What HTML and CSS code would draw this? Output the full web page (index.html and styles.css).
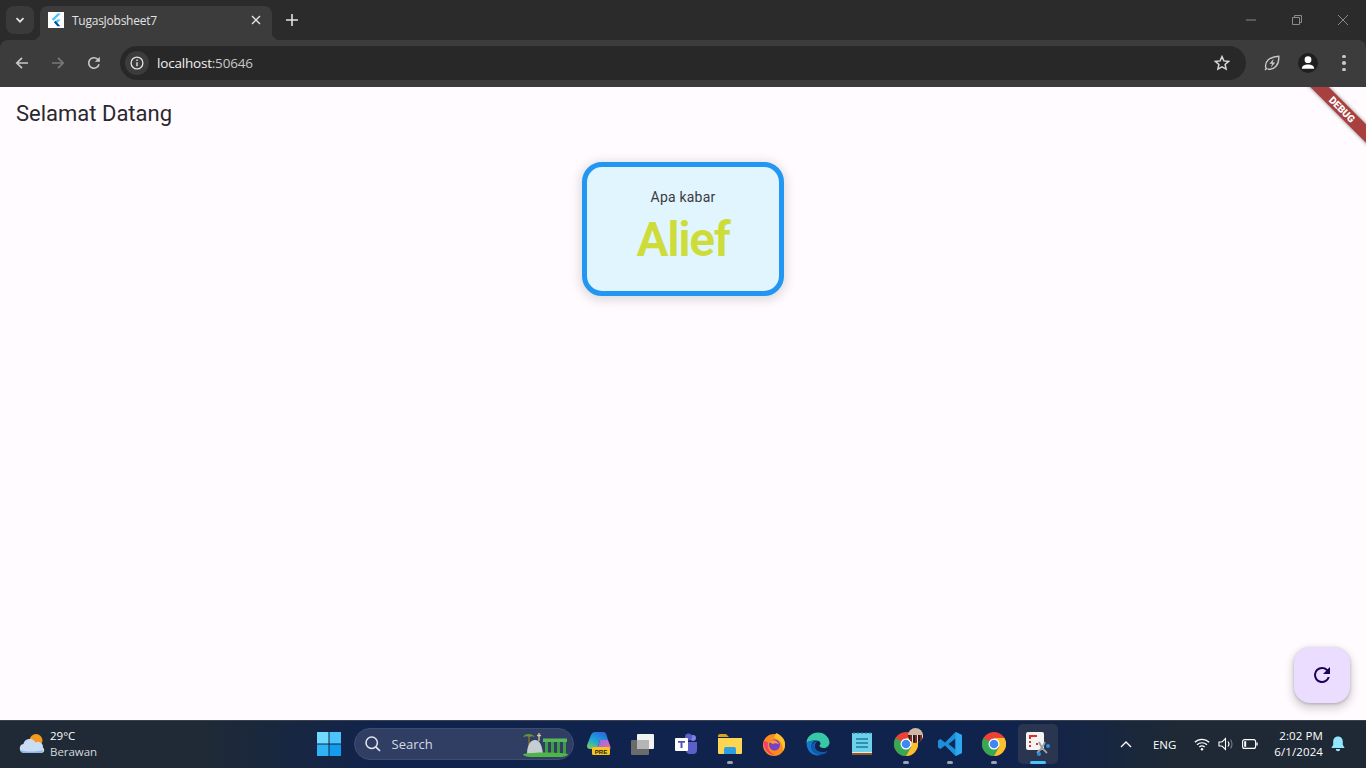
FILE: index.html
```html
<!doctype html>
<html>
<head>
<title>TugasJobsheet7</title>
<link rel="stylesheet" href="styles.css">
</head>
<body>

<div class="browser">
<div class="tabstrip">
    <div class="tabsearch">
        <svg width="12" height="12" viewBox="0 0 12 12"><path d="M2.5 4.2 6 7.7l3.5-3.5" fill="none" stroke="#e3e3e3" stroke-width="1.7"/></svg>
    </div>
    <div class="tab">
        <div class="favicon">
            <svg width="16" height="16" viewBox="0 0 16 16"><path d="M9.6 1.5h3.2L5.4 8.700 3.800 7.200z" fill="#47c5fb"/><path d="M9.6 7.500h3.200L8.200 12 5.900 10.200z" fill="#47c5fb"/><path d="M5.900 10.200 7.500 8.700l4.900 5.500H9.400z" fill="#00569e"/></svg>
        </div>
        <span class="tabtitle">TugasJobsheet7</span>
        <svg class="tabclose" width="10" height="10" viewBox="0 0 10 10"><path d="M1 1l8 8M9 1 1 9" stroke="#e3e3e3" stroke-width="1.4"/></svg>
    </div>
    <svg class="newtab" width="12" height="12" viewBox="0 0 12 12"><path d="M6 0v12M0 6h12" stroke="#e3e3e3" stroke-width="1.6"/></svg>
    <div class="winbtns">
        <svg width="10" height="10" viewBox="0 0 10 10"><path d="M0 5h10" stroke="#8a8a8a"/></svg>
        <svg width="10" height="10" viewBox="0 0 10 10"><path d="M.5 2.5h7v7h-7zM2.5 2.5v-2h7v7h-2" fill="none" stroke="#8a8a8a"/></svg>
        <svg width="10" height="10" viewBox="0 0 10 10"><path d="M0 0l10 10M10 0 0 10" stroke="#8a8a8a"/></svg>
    </div>
</div>

<div class="toolbar">
    <svg class="navicon" width="16" height="16" viewBox="0 0 16 16"><path d="M14 8H3M8 2.800 2.800 8 8 13.200" fill="none" stroke="#c7c7c7" stroke-width="1.700"/></svg>
    <svg class="navicon" width="16" height="16" viewBox="0 0 16 16"><path d="M2 8h11M8 2.800 13.200 8 8 13.200" fill="none" stroke="#787878" stroke-width="1.700"/></svg>
    <svg class="navicon" width="16" height="16" viewBox="0 0 16 16"><path d="M13 9.200A5.200 5.200 0 1 1 11.600 4.300L13.400 6" fill="none" stroke="#c7c7c7" stroke-width="1.600"/><path d="M13.800 1.800v5h-5z" fill="#c7c7c7"/></svg>
    <div class="omnibox">
        <div class="siteinfo">
            <svg width="14" height="14" viewBox="0 0 14 14"><circle cx="7" cy="7" r="5.900" fill="none" stroke="#e3e3e3" stroke-width="1.300"/><path d="M7 6.200v4M7 3.600v1.500" stroke="#e3e3e3" stroke-width="1.400"/></svg>
        </div>
        <span class="url">localhost<span class="port">:50646</span></span>
        <svg class="star" width="16" height="16" viewBox="0 0 16 16"><path d="M8 1.600l1.900 4.300 4.700.5-3.500 3.100 1 4.600L8 11.800l-4.100 2.300 1-4.600L1.400 6.400l4.700-.5z" fill="none" stroke="#d6d6d6" stroke-width="1.500"/></svg>
    </div>
    <svg class="leaf" width="16" height="16" viewBox="0 0 16 16"><path d="M1.900 13.200C.2 7.200 5 1.600 14.800 1.200 15.400 9.500 10.500 15.400 3.600 14M1 15l2-2" fill="none" stroke="#c7c7c7" stroke-width="1.400"/><path d="M9.800 3.800 5.400 8.800h2.700l-1.200 3.600 4.300-5H8.600z" fill="#c7c7c7"/></svg>
    <div class="avatar">
        <svg width="20" height="20" viewBox="0 0 20 20"><circle cx="10" cy="6.700" r="3.400" fill="#fff"/><path d="M3.800 15.800c0-3 3-4.300 6.200-4.300s6.200 1.300 6.200 4.300z" fill="#fff"/></svg>
    </div>
    <div class="kebab"><i></i><i></i><i></i></div>
</div>
</div>

<div class="page">
    <div class="appbar">Selamat Datang</div>
    <div class="card">
        <div class="greet">Apa kabar</div>
        <div class="name">Alief</div>
    </div>
    <div class="fab">
        <svg width="24" height="24" viewBox="0 0 24 24"><path d="M17.650 6.350A7.960 7.960 0 0 0 12 4a8 8 0 1 0 7.730 10h-2.080A6 6 0 1 1 12 6c1.660 0 3.140.69 4.220 1.780L13 11h7V4z" fill="#21005d"/></svg>
    </div>
    <div class="ribbon">DEBUG</div>
</div>

<div class="taskbar">
    <div class="weather">
        <svg width="28" height="26" viewBox="0 0 28 26"><circle cx="18" cy="9.500" r="6.500" fill="#f39a1f"/><path d="M6 22a4.500 4.500 0 0 1-.6-8.900A6.500 6.500 0 0 1 17.500 11.500a5 5 0 0 1 7.500 5c2 1.500 1.500 5.500-1.500 5.500z" fill="#c9def5"/><path d="M2 19c6 2 15 2 23 0-.3 2-1 3-2 3H6c-2 0-3.500-1-4-3z" fill="#8fb6e6"/></svg>
        <div class="weathertext">
            <div class="temp">29°C</div>
            <div class="cond">Berawan</div>
        </div>
    </div>

    <div class="apps">
        <div class="app winlogo">
            <svg width="24" height="24" viewBox="0 0 24 24"><path d="M0 0h11.500v11.500H0z" fill="#6fdcff"/><path d="M12.500 0H24v11.500H12.500z" fill="#4cc4fb"/><path d="M0 12.500h11.500V24H0z" fill="#2fb3f5"/><path d="M12.500 12.500H24V24H12.500z" fill="#129cee"/></svg>
        </div>
        <div class="searchbox">
            <svg width="18" height="18" viewBox="0 0 18 18"><circle cx="7.700" cy="7.700" r="5.700" fill="none" stroke="#e6e9f2" stroke-width="1.500"/><path d="M11.800 11.800 16 16" stroke="#e6e9f2" stroke-width="1.700"/></svg>
            <span class="searchtext">Search</span>
            <svg class="searchart" width="48" height="28" viewBox="0 0 48 28"><path d="M7 5v10" stroke="#8a6a2a" stroke-width="1.500"/><path d="M1 7c2-4 9-4 12 0-3-1-4-1-5 0-2-1-4-1-7 0z" fill="#5c9a3a"/><path d="M5 24c0-8 3-14 8-14s7 6 8 14z" fill="#c4cdd0"/><path d="M17 3v8M15 5.500h4" stroke="#d8c9a0" stroke-width="1.300"/><path d="M21 8.500h24v3.500H21z" fill="#56b85a"/><path d="M23 12h3v12h-3zM29 12h3v12h-3zM35 12h3v12h-3zM41 12h3v12h-3z" fill="#3f9c46"/><path d="M1 24c10-2 34-2 45 0 0 2-4 3-8 3H9c-4 0-8-1-8-3z" fill="#4fb548"/></svg>
        </div>
        <div class="app copilot">
            <svg width="24" height="24" viewBox="0 0 24 24">
                <defs>
                    <linearGradient id="cpa" x1="0" y1="1" x2=".6" y2="0"><stop offset="0" stop-color="#8fd13f"/><stop offset=".5" stop-color="#1fa8d8"/><stop offset="1" stop-color="#2a6fe0"/></linearGradient>
                    <linearGradient id="cpb" x1="0" y1="0" x2="1" y2="1"><stop offset="0" stop-color="#8a6ce8"/><stop offset="1" stop-color="#f06bb0"/></linearGradient>
                </defs>
                <path d="M8 0h8c2 0 3 1 3.500 3L21 8H13l-3 9H3C0 17-.5 14 .5 12L4 3C5 1 6 0 8 0z" fill="url(#cpa)"/>
                <path d="M13 8h8l2.500 7c.5 2-1 3-3 3H10z" fill="url(#cpb)"/>
                <rect x="5" y="15" width="18" height="8" rx="1.500" fill="#f8c51c"/>
                <text class="pre" x="14" y="21.500" text-anchor="middle">PRE</text>
            </svg>
        </div>
        <div class="app">
            <svg width="24" height="24" viewBox="0 0 24 24"><rect x="1" y="8" width="18" height="15" rx="1" fill="#6b6b6b"/><rect x="7" y="2" width="17" height="15" rx="1" fill="#f2f2f2"/><path d="M7 8h12v9H7z" fill="#b5b5b5"/></svg>
        </div>
        <div class="app">
            <svg width="24" height="24" viewBox="0 0 24 24"><circle cx="19" cy="6" r="3" fill="#7b83eb"/><circle cx="14.500" cy="5" r="3.500" fill="#5b5fc7"/><path d="M12 10h11v8a4 4 0 0 1-4 4h-3a4 4 0 0 1-4-4z" fill="#5b5fc7"/><rect x="1" y="6" width="13" height="13" rx="1" fill="#fff"/><path d="M4 9h7v1.800H8.500V16h-2v-5.200H4z" fill="#4b53bc"/></svg>
        </div>
        <div class="app dot">
            <svg width="24" height="24" viewBox="0 0 24 24"><path d="M0 4a2 2 0 0 1 2-2h6l3 3H0z" fill="#d9a21b"/><path d="M0 6h24v15a1 1 0 0 1-1 1H1a1 1 0 0 1-1-1z" fill="#fcd653"/><path d="M6 17a2 2 0 0 1 2-2h8a2 2 0 0 1 2 2v5H6z" fill="#2a9fe6"/></svg>
        </div>
        <div class="app">
            <svg width="24" height="24" viewBox="0 0 24 24"><circle cx="12" cy="13" r="11" fill="#ff8a1f"/><path d="M14 1c5 2 9 6 9 11 0 3-1 6-2 7 0-7-3-12-9-13z" fill="#ffc22e"/><path d="M1.500 9C1 16 6 23 13 23c-6-2-8-8-7-13z" fill="#f4406a"/><circle cx="12.500" cy="13" r="5.500" fill="#7542c9"/><path d="M7 10c3-3 8-2 10 2-3-1-5-1-6 0z" fill="#ff9a2e"/></svg>
        </div>
        <div class="app">
            <svg width="24" height="24" viewBox="0 0 24 24"><path d="M.5 11C.5 5 6 .5 12 .5c6.500 0 11.500 5 11.500 10 0 3.500-3 5.500-6 5.500-2.500 0-4-1-4-2.500 2-1.500 1-5-3-5-4 0-8 .5-10 2.500z" fill="#37c8a8"/><path d="M.5 11c2-2 6-2.500 9-2.500-2.500 1-4.500 3.500-4 7 .5 4 4 7 9 7 .500 0 1-.1 1.500-.2C14.500 23 13.300 23.500 12 23.500 5.500 23.500.5 18 .5 11z" fill="#1777cf"/><path d="M5.500 15.500c.5 4 4 7 9 7 3.500 0 6-1.500 7.500-4-1.500 1-3.500 1.500-5.500 1.500-4.500 0-7.500-2.500-7.500-5.500 0-2.500 1-4 2.500-5.500-3 .5-6.500 3-6 6.500z" fill="#0f5cae"/></svg>
        </div>
        <div class="app">
            <svg width="22" height="24" viewBox="0 0 22 24"><rect x="1" y="1" width="20" height="20" fill="#6fd0ea"/><path d="M1 20h20v3H1z" fill="#8a5a2b"/><path d="M1 20h20v1H1z" fill="#f0e6d2"/><path d="M5 7h12M5 11h12M5 15h12" stroke="#177ea0" stroke-width="1.600"/><path d="M3 0v2M7 0v2M11 0v2M15 0v2M19 0v2" stroke="#177ea0" stroke-width="1.200"/></svg>
        </div>
        <div class="app dot badged">
            <svg width="24" height="24" viewBox="0 0 24 24"><use href="#chromeicon"/></svg>
            <div class="badge"><i></i></div>
        </div>
        <div class="app dot">
            <svg width="24" height="24" viewBox="0 0 24 24"><path d="M17.500 0 24 3v18l-6.500 3L7 13.500 2.500 17 0 15.500V8.500L2.500 7 7 10.500z" fill="#1c8fd8"/><path d="M17.500 6.500 10.500 12l7 5.500z" fill="#0f2a56"/><path d="M17.500 0 24 3v18l-6.500 3z" fill="#2aa8f0"/></svg>
        </div>
        <div class="app dot">
            <svg width="24" height="24" viewBox="0 0 24 24">
                <defs>
                    <g id="chromeicon">
                        <circle cx="12" cy="12" r="12" fill="#ea4335"/>
                        <path d="M12 12 1.600 6A12 12 0 0 0 12 24l5.200-9z" fill="#34a853"/>
                        <path d="M12 6h10.400A12 12 0 0 1 12 24l5.200-9z" fill="#fbc02d"/>
                        <circle cx="12" cy="12" r="5.500" fill="#fff"/>
                        <circle cx="12" cy="12" r="4.300" fill="#4285f4"/>
                    </g>
                </defs>
                <use href="#chromeicon"/>
            </svg>
        </div>
        <div class="app active">
            <svg width="26" height="26" viewBox="0 0 26 26"><rect x="1" y="1" width="18" height="18" rx="2" fill="#f4f4f4"/><path d="M4 4h8v2H6v2H4zM4 10h2v2H4zM4 14h2v2H4z" fill="#d9331f"/><path d="M11 12h2v2h-2z" fill="#d9331f"/><path d="M14 11l3 6 5 5M20 11l-3 6-5 5" fill="none" stroke="#9aa0a6" stroke-width="1.800"/><circle cx="23" cy="15" r="2" fill="#2a8fd8"/><circle cx="14" cy="23" r="2" fill="#2a8fd8"/></svg>
        </div>
    </div>

    <div class="tray">
        <svg width="12" height="8" viewBox="0 0 12 8"><path d="M1 7l5-5 5 5" fill="none" stroke="#fff" stroke-width="1.400"/></svg>
        <span class="lang">ENG</span>
        <div class="status">
            <svg width="16" height="14" viewBox="0 0 16 14"><path d="M.8 5.200C4.800 1.300 11.200 1.300 15.200 5.200M3 7.700c2.800-2.600 7.200-2.600 10 0M5.300 10c1.500-1.200 3.900-1.200 5.400 0" fill="none" stroke="#fff" stroke-width="1.200"/><circle cx="8" cy="12.300" r="1.200" fill="#fff"/></svg>
            <svg width="16" height="14" viewBox="0 0 16 14"><path d="M1 5h3l3.500-3.500v11L4 9H1z" fill="none" stroke="#fff" stroke-width="1.100"/><path d="M10 4.500c1.200 1.500 1.200 3.500 0 5" fill="none" stroke="#fff" stroke-width="1.100"/><path d="M12.500 2.500c2 2.500 2 6.500 0 9" fill="none" stroke="#777d85" stroke-width="1.100"/></svg>
            <svg width="16" height="12" viewBox="0 0 16 12"><rect x=".6" y="1.600" width="13" height="8.800" rx="2" fill="none" stroke="#fff" stroke-width="1.100"/><rect x="2.200" y="3.200" width="2" height="5.600" fill="#fff"/><path d="M15 4.500v3" stroke="#fff" stroke-width="1.400"/></svg>
        </div>
        <div class="clock">
            <div>2:02 PM</div>
            <div>6/1/2024</div>
        </div>
        <svg class="bell" width="14" height="16" viewBox="0 0 14 16"><path d="M7 .5c3 0 4.800 2.200 4.800 5v3.200L13.600 12H.4l1.800-3.300V5.500C2.200 2.700 4 .5 7 .5z" fill="#93e6fb"/><path d="M4.800 13h4.400a2.200 2.200 0 0 1-4.400 0z" fill="#93e6fb"/></svg>
    </div>
</div>

</body>
</html>
```

FILE: styles.css
```css
html,body{
    height: 100%;
    margin: 0;
}
body{
    display: flex;
    flex-direction: column;
    overflow: hidden;
    font-family: Roboto,"Noto Sans",sans-serif;
    background-color: #fffbff;
}
svg{
    display: block;
    flex: none;
}

/* browser */
.browser{
    flex: none;
    background-color: #2b2b2b;
}
.tabstrip{
    height: 40px;
    display: flex;
    align-items: flex-end;
}
.tabsearch{
    width: 28px;
    height: 28px;
    margin: 0 6px 6px 6px;
    border-radius: 8px;
    background-color: #3a3a3a;
    display: flex;
    align-items: center;
    justify-content: center;
}
.tab{
    position: relative;
    width: 232px;
    height: 34px;
    box-sizing: border-box;
    padding: 0 11px 6px 8px;
    border-radius: 8px 8px 0 0;
    background-color: #3c3c3c;
    display: flex;
    align-items: center;
}
.tab::before,.tab::after{
    content: '';
    position: absolute;
    bottom: 0;
    width: 8px;
    height: 8px;
}
.tab::before{
    left: -8px;
    background: radial-gradient(circle at 0 0,#2b2b2b 8px,#3c3c3c 8.500px);
}
.tab::after{
    right: -8px;
    background: radial-gradient(circle at 100% 0,#2b2b2b 8px,#3c3c3c 8.500px);
}
.favicon{
    width: 16px;
    height: 16px;
    background-color: #fff;
    flex: none;
}
.tabtitle{
    flex: 1;
    margin-left: 8px;
    font: 12px "Open Sans","Noto Sans",sans-serif;
    letter-spacing: -.25px;
    color: #e3e3e3;
}
.newtab{
    margin: 0 0 14px 14px;
}
.winbtns{
    margin-left: auto;
    height: 40px;
    padding-right: 18px;
    display: flex;
    align-items: center;
    gap: 36px;
}
.toolbar{
    height: 47px;
    box-sizing: border-box;
    padding: 0 13px 1px 14px;
    display: flex;
    align-items: center;
    background-color: #3c3c3c;
    border-radius: 8px 8px 0 0;
}
.navicon{
    margin-right: 20px;
}
.navicon:nth-child(3){
    margin-right: 18px;
}
.omnibox{
    width: 1126px;
    height: 34px;
    flex: none;
    box-sizing: border-box;
    padding: 0 16px 0 5px;
    border-radius: 17px;
    background-color: #282828;
    display: flex;
    align-items: center;
}
.siteinfo{
    width: 24px;
    height: 24px;
    border-radius: 50%;
    background-color: #3c3c3c;
    display: flex;
    align-items: center;
    justify-content: center;
}
.url{
    margin-left: 8px;
    flex: 1;
    font: 13.500px "Open Sans","Noto Sans",sans-serif;
    letter-spacing: -.2px;
    color: #f1f1f1;
}
.port{
    color: #c7c7c7;
}
.leaf{
    margin-left: 18px;
}
.avatar{
    width: 20px;
    height: 20px;
    margin-left: 18px;
    border-radius: 50%;
    background-color: #1f1f1f;
}
.kebab{
    margin-left: 24px;
    display: flex;
    flex-direction: column;
    gap: 3px;
}
.kebab i{
    width: 3.500px;
    height: 3.500px;
    border-radius: 50%;
    background-color: #c7c7c7;
}

/* flutter page */
.page{
    position: relative;
    flex: 1;
    min-height: 0;
    display: flex;
    flex-direction: column;
    align-items: center;
    background-color: #fffbff;
    overflow: hidden;
}
.appbar{
    align-self: stretch;
    height: 75px;
    box-sizing: border-box;
    padding: 13px 16px 0;
    font-size: 22px;
    line-height: 28px;
    color: #2a282d;
}
.card{
    width: 202px;
    height: 134px;
    box-sizing: border-box;
    border: 5px solid #2196f3;
    border-radius: 20px;
    background-color: #e1f5fe;
    box-shadow: 0 2px 10px 3px rgba(158,158,158,.32);
    padding-top: 20px;
    text-align: center;
}
.greet{
    font-size: 14px;
    line-height: 20px;
    color: #3b3a40;
    letter-spacing: .2px;
}
.name{
    margin-top: 5px;
    font-size: 48px;
    line-height: 56px;
    font-weight: 600;
    letter-spacing: -1.4px;
    color: #cddc39;
}
.fab{
    position: absolute;
    right: 16px;
    bottom: 17px;
    width: 56px;
    height: 56px;
    border-radius: 16px;
    background-color: #eaddff;
    box-shadow: 0 4px 8px 2px rgba(0,0,0,.16),0 1px 3px rgba(0,0,0,.2);
    display: flex;
    align-items: center;
    justify-content: center;
}
.ribbon{
    position: absolute;
    top: 0;
    right: -36px;
    width: 112px;
    height: 13px;
    transform: translate(-4px,16px) rotate(45deg);
    background-color: #a8403f;
    box-shadow: 0 0 4px rgba(0,0,0,.5);
    color: #fff;
    font-size: 10px;
    font-weight: 900;
    line-height: 13px;
    text-align: center;
}

/* windows */
.taskbar{
    height: 48px;
    flex: none;
    box-sizing: border-box;
    border-top: 1px solid #3a4250;
    padding-bottom: 1px;
    display: grid;
    grid-template-columns: 1fr auto 1fr;
    align-items: center;
    background: linear-gradient(90deg,#1f2a36 0,#1f2a36 15%,#10234d 28%,#10234d 75%,#1e2935 86%,#1e2935 100%);
    color: #fff;
    font-family: "Open Sans","Noto Sans",sans-serif;
}
.weather{
    display: flex;
    align-items: center;
    gap: 4px;
    padding-left: 18px;
}
.temp{
    font-size: 11.500px;
    line-height: 16px;
}
.cond{
    font-size: 11.500px;
    line-height: 16px;
    letter-spacing: -.05px;
    color: #d5d8dc;
}
.apps{
    display: flex;
    align-items: center;
    margin-right: 2px;
}
.app{
    position: relative;
    width: 44px;
    height: 40px;
    display: flex;
    align-items: center;
    justify-content: center;
}
.winlogo svg{
    margin-left: 1px;
}
.copilot svg{
    margin-left: 2px;
}
.pre{
    font: 700 6px "Liberation Sans",sans-serif;
    fill: #1a1a1a;
}
.dot::after{
    content: '';
    position: absolute;
    bottom: 0;
    left: 19px;
    width: 6px;
    height: 3px;
    border-radius: 2px;
    background-color: #9aa3b2;
}
.active{
    width: 40px;
    margin-left: 2px;
    border-radius: 5px;
    background-color: #2a3550;
}
.active::after{
    content: '';
    position: absolute;
    bottom: 0;
    left: 12px;
    width: 16px;
    height: 3px;
    border-radius: 2px;
    background-color: #4cc2ff;
}
.badge{
    position: absolute;
    top: 4px;
    right: 5px;
    width: 15px;
    height: 15px;
    border-radius: 50%;
    background-color: #cdb8a6;
    overflow: hidden;
}
.badge i{
    display: block;
    width: 15px;
    height: 8px;
    margin-top: 7px;
    background: repeating-linear-gradient(90deg,#2a1a1a 0 2px,#7a2a2a 2px 4px,#e6dcd2 4px 5px);
}
.searchbox{
    width: 220px;
    height: 32px;
    box-sizing: border-box;
    margin: 0 2px 0 3px;
    padding: 0 3px 0 9px;
    border-radius: 16px;
    border: 1px solid #3e4d70;
    background-color: #303e63;
    display: flex;
    align-items: center;
}
.searchtext{
    margin-left: 10px;
    flex: 1;
    font-size: 13px;
    color: #d5d9e4;
}
.tray{
    justify-self: end;
    display: flex;
    align-items: center;
}
.lang{
    margin-left: 21px;
    font-size: 11.500px;
}
.status{
    display: flex;
    align-items: center;
    gap: 8px;
    margin-left: 18px;
}
.clock{
    margin-left: 16px;
    text-align: right;
    font-size: 11.500px;
    line-height: 16px;
    letter-spacing: .1px;
}
.bell{
    margin: 0 21px 0 8px;
}
```
